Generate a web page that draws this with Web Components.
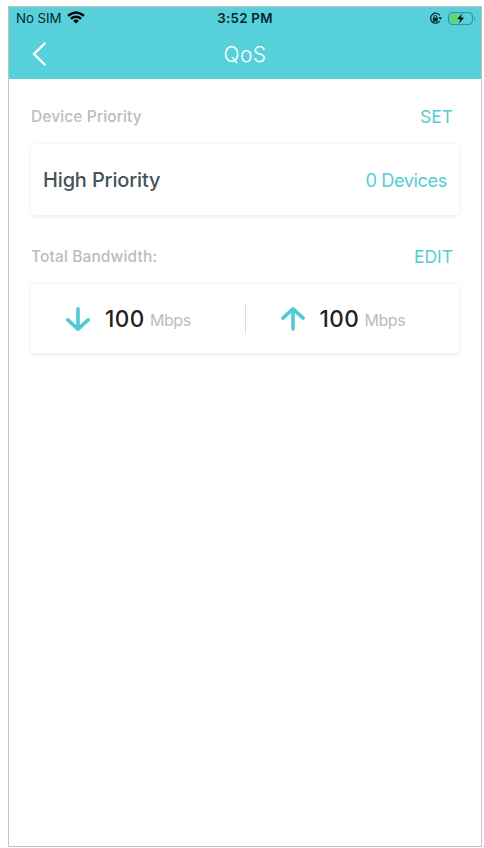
<!DOCTYPE html>
<html lang="en"><head><meta charset="utf-8"><title>QoS</title>
<style>
html,body{margin:0;height:100%;background:#fff;overflow:hidden}
body{font-family:Inter,"Liberation Sans",sans-serif}
</style></head><body>
<qos-screen></qos-screen>
<script>
const define=(name,html)=>customElements.define(name,class extends HTMLElement{
  constructor(){super();this.attachShadow({mode:'open'}).innerHTML=html;}
});
define('status-bar',`<style>
:host{display:grid;grid-template-columns:1fr auto 1fr;align-items:center;height:22px;padding:0 6px 0 7px;color:#08262b;font-size:13.3px;line-height:22px}
.l,.r{display:flex;align-items:center}.l{gap:5px}.r{justify-content:flex-end;gap:6px}
.l span{letter-spacing:-.05px}
.time{font-weight:600;letter-spacing:.3px;padding-right:1px}
svg{display:block}
.wifi{margin-top:-2px}
</style>
<div class="l"><span>No SIM</span>
<svg class="wifi" width="18" height="13" viewBox="0 0 18 13" fill="none" stroke="#000" stroke-width="2.5"><path d="M1.1 4.7Q9-1.8 16.9 4.7M3.9 7.8Q9 3.7 14.1 7.8"/><path d="M9 12.6 6.1 9.8Q9 7.4 11.9 9.8Z" fill="#000" stroke="none"/></svg></div>
<span class="time">3:52 PM</span>
<div class="r">
<svg width="13" height="13" viewBox="0 0 13 13"><path d="M10.8 3.4A5 5 0 1 0 10.8 9" fill="none" stroke="#08262b" stroke-width="1.2"/><path d="M9.5 5.3h3.4l-1.6 2.7zM3.9 5.7h4.9v3.7H3.9z" fill="#08262b"/><path d="M5 6V4.8a1.4 1.4 0 0 1 2.8 0V6" fill="none" stroke="#08262b"/></svg>
<svg width="27" height="13" viewBox="0 0 27 13"><rect x=".6" y=".6" width="23.8" height="11.8" rx="3.4" fill="none" stroke="#358b94"/><path d="M4 2h6.6v9H4a2 2 0 0 1-2-2V4a2 2 0 0 1 2-2z" fill="#5bdc68"/><path d="M26 4.5v4c1.3-.6 1.3-3.4 0-4z" fill="#358b94"/><path d="M14.4.9 8.9 7.3h3.3L10.8 12.1l5.5-6.6H13z" fill="#000" stroke="#56d0db" stroke-width=".3"/></svg>
</div>`);
define('nav-bar',`<style>
:host{display:grid;grid-template-columns:1fr auto 1fr;align-items:center;height:50px;padding:0 23px;color:#fff}
h1{margin:0;font-size:21px;font-weight:350;line-height:26px;letter-spacing:.4px;padding-top:2px}
svg{display:block}
</style>
<svg width="14" height="24" viewBox="0 0 14 24" fill="none" stroke="#fff" stroke-width="2.4" stroke-linecap="round"><path d="M12.7 1.5 2 12l10.7 10.5"/></svg>
<h1><slot></slot></h1><span></span>`);
define('section-head',`<style>
:host{display:flex;justify-content:space-between;align-items:center;height:24px;padding:0 6px 0 0}
span{line-height:24px}
.t{color:#bcbcbf;font-size:15.5px;font-weight:500;letter-spacing:.12px}
.a{color:#54ccd3;font-size:17.5px;letter-spacing:-.02px}
</style><span class="t"><slot></slot></span><span class="a"><slot name="action"></slot></span>`);
define('info-card',`<style>
:host{display:flex;align-items:center;box-sizing:border-box;background:#fff;border-radius:4px;box-shadow:0 1px 5px rgba(0,0,0,.1)}
</style><slot></slot>`);
define('priority-row',`<style>
:host{display:flex;flex:1;justify-content:space-between;align-items:center;padding:0 12px 0 12px}
.n{font-size:20px;font-weight:500;color:#455359;letter-spacing:-.15px}.c{font-size:18.3px;color:#54ccd3;letter-spacing:-.45px}
</style><span class="n"><slot></slot></span><span class="c"><slot name="count"></slot></span>`);
customElements.define('speed-value',class extends HTMLElement{
  constructor(){super();this.attachShadow({mode:'open'}).innerHTML=`<style>
:host{display:flex;flex:1;align-items:center}
svg{display:block;margin-right:15px}:host([dir-up]) svg{transform:rotate(180deg)}
.v{font-size:22.5px;font-weight:500;color:#222;letter-spacing:.5px}.u{font-size:16px;color:#bcbcbf;margin-left:5px;letter-spacing:-.4px;position:relative;top:-1px}
.g{display:flex;align-items:baseline}
</style><svg width="24" height="24" viewBox="0 0 24 24" fill="none" stroke="#4fcbd6" stroke-width="3.6" stroke-linecap="round" stroke-linejoin="round"><path d="M12 1.9v19.8M1.9 12.9 12 22.1l10.1-9.2"/></svg>
<span class="g"><span class="v"><slot></slot></span><span class="u">Mbps</span></span>`;}
});
define('qos-screen',`<style>
:host{display:block;box-sizing:border-box;width:474px;height:841px;margin:6px 0 0 8px;border:1px solid #c4c4c4;background:#fff}
header{background:#56d0db;height:72px}
main{display:flex;flex-direction:column;padding:26px 22px 0}
info-card.p{height:71px;margin:15px 0 30px}
info-card.b{height:69px;margin-top:15px}
speed-value{padding-left:35px}
i{width:1px;height:30px;background:#dedede}
</style>
<header><status-bar></status-bar><nav-bar>QoS</nav-bar></header>
<main>
<section-head>Device Priority<span slot="action">SET</span></section-head>
<info-card class="p"><priority-row>High Priority<span slot="count">0 Devices</span></priority-row></info-card>
<section-head>Total Bandwidth:<span slot="action">EDIT</span></section-head>
<info-card class="b"><speed-value>100</speed-value><i></i><speed-value dir-up>100</speed-value></info-card>
</main>`);
</script></body></html>
